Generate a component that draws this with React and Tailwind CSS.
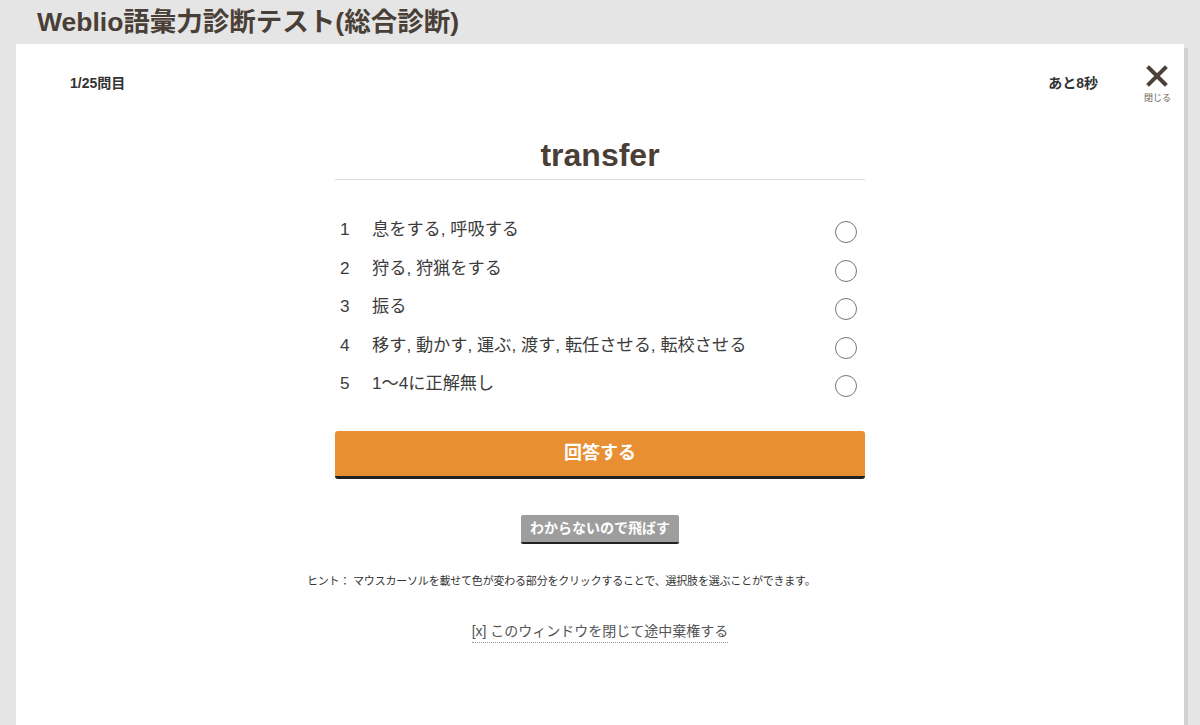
const FONT = "font-['Liberation_Sans','Noto_Sans_CJK_JP',sans-serif]";

const choices = [
  "息をする, 呼吸する",
  "狩る, 狩猟をする",
  "振る",
  "移す, 動かす, 運ぶ, 渡す, 転任させる, 転校させる",
  "1〜4に正解無し",
];

function CloseIcon() {
  return (
    <svg width="22" height="22" viewBox="0 0 22 22" className="block">
      <path d="M3 3 L19 19 M19 3 L3 19" stroke="#4d4038" strokeWidth="4" strokeLinecap="square" />
    </svg>
  );
}

export default function App() {
  return (
    <div className={`${FONT} bg-[#e5e5e5] w-[1200px] h-[725px] overflow-hidden`}>
      {/* page title */}
      <div className="h-[44px] flex items-center pl-[37px]">
        <h1 className="text-[26.5px] leading-[30px] font-bold text-[#4a3f37]">
          Weblio語彙力診断テスト(総合診断)
        </h1>
      </div>

      {/* modal */}
      <div className="ml-[16px] w-[1168px] h-[700px] bg-white shadow-[4px_4px_0_#d2d2d2]">
        <div className="flex justify-between items-start pt-[21px] pl-[54px] pr-[13px]">
          <span className="mt-[9px] text-[14px] leading-[18px] font-bold text-[#333]">1/25問目</span>
          <div className="flex items-start gap-[46px]">
            <span className="mt-[9px] text-[14px] leading-[18px] font-bold text-[#333]">あと8秒</span>
            <button className="flex flex-col items-center">
              <CloseIcon />
              <span className="mt-[5px] text-[9px] leading-[12px] text-[#6b5f57]">閉じる</span>
            </button>
          </div>
        </div>

        <div className="w-[530px] mx-auto">
          <div className="mt-[31px] pb-[4px] border-b border-[#dcdcdc] text-center">
            <h2 className="text-[32px] leading-[40px] font-bold text-[#4a3f37]">transfer</h2>
          </div>

          <ul className="mt-[31px]">
            {choices.map((c, i) => (
              <li key={i} className="h-[38.5px] flex items-center text-[17.2px] text-[#3c3c3c]">
                <span className="w-[37px] pl-[5px]">{i + 1}</span>
                <span className="flex-1">{c}</span>
                <span className="mr-[8px] mt-[4px] w-[22px] h-[22px] rounded-full border border-[#777]" />
              </li>
            ))}
          </ul>

          <button className="mt-[27px] w-full h-[48px] bg-[#e88f34] border-b-[3px] border-[#222] rounded-[3px] text-white text-[18px] font-bold">
            回答する
          </button>

          <div className="mt-[36px] flex justify-center">
            <button className="h-[29px] px-[9px] bg-[#9e9e9e] border-b-2 border-[#222] rounded-[2px] text-white text-[14px] font-bold leading-[26px]">
              わからないので飛ばす
            </button>
          </div>
        </div>

        <p className="w-[586px] mx-auto mt-[29px] text-[11px] leading-[16px] tracking-[-0.2px] text-[#333]">
          ヒント： マウスカーソルを載せて色が変わる部分をクリックすることで、選択肢を選ぶことができます。
        </p>

        <div className="mt-[30px] text-center">
          <a className="inline-block text-[14px] leading-[20px] text-[#555] border-b border-dotted border-[#999] pb-[1px]">
            [x] このウィンドウを閉じて途中棄権する
          </a>
        </div>
      </div>
    </div>
  );
}
